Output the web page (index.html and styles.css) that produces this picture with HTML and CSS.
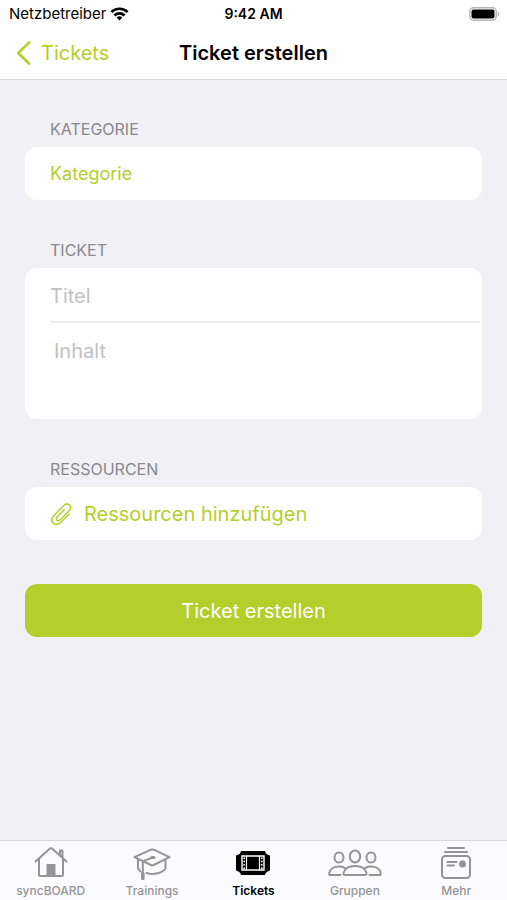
FILE: index.html
```html
<!DOCTYPE html>
<html lang="de">
<head>
<meta charset="utf-8">
<meta name="viewport" content="width=device-width, initial-scale=1">
<title>Ticket erstellen</title>
<link rel="stylesheet" href="styles.css">
</head>
<body>
<header class="header">
  <div class="status">
    <span class="carrier">Netzbetreiber
      <svg width="19" height="14" viewBox="0 0 18 14" aria-hidden="true"><g fill="none" stroke="#000" stroke-width="2.700"><path d="M.9 5.1a11.5 11.5 0 0 1 16.2 0"/><path d="M3.9 8.500a7.3 7.3 0 0 1 10.2 0"/></g><path d="M9 13.6l-2.900-3a4.2 4.2 0 0 1 5.800 0z"/></svg>
    </span>
    <span class="time">9:42 AM</span>
    <svg class="battery" width="31" height="14" viewBox="0 0 31 14" aria-hidden="true"><rect x=".75" y=".75" width="26.5" height="12.5" rx="4" fill="#fff" stroke="#b5b5b5" stroke-width="1.5"/><rect x="2.5" y="2.5" width="23" height="9" rx="2"/><path d="M28.7 4.6c2 .8 2 4 0 4.800z" fill="#b5b5b5"/></svg>
  </div>
  <nav class="navbar">
    <a class="back" href="#">
      <svg width="15" height="24" viewBox="0 0 15 24" aria-hidden="true"><path d="M13 1.500L2.200 12 13 22.500" fill="none" stroke="currentColor" stroke-width="2.600" stroke-linecap="round" stroke-linejoin="round"/></svg>
      Tickets
    </a>
    <h1 class="title">Ticket erstellen</h1>
  </nav>
</header>
<main class="main">
  <form class="form">
    <section class="section">
      <h2 class="label">KATEGORIE</h2>
      <button class="card row category" type="button">Kategorie</button>
    </section>
    <section class="section">
      <h2 class="label">TICKET</h2>
      <div class="card">
        <input class="field" type="text" placeholder="Titel" aria-label="Titel">
        <textarea class="field area" placeholder="Inhalt" aria-label="Inhalt"></textarea>
      </div>
    </section>
    <section class="section">
      <h2 class="label">RESSOURCEN</h2>
      <button class="card row" type="button">
        <svg width="22" height="24" viewBox="0 0 22 24" fill="none" stroke="currentColor" stroke-width="1.500" stroke-linecap="round" stroke-linejoin="round" aria-hidden="true"><path d="M19.200 12L11.200 20C8.600 22.600 5.200 23.100 3.200 21C1.200 19 1.600 16.100 4 13.600L13.600 3.700C15.400 1.800 18 1.400 19.600 3C21.200 4.600 20.800 7 19 8.900L10.300 17.700C9.200 18.800 7.800 19 6.900 18.100C6 17.200 6.200 15.900 7.300 14.800L14.200 7.800"/></svg>
        Ressourcen hinzufügen
      </button>
    </section>
    <button class="submit" type="submit">Ticket erstellen</button>
  </form>
</main>
<nav class="tabs">
  <a class="tab" href="#">
    <svg width="34" height="34" viewBox="0 0 34 34" fill="none" stroke="currentColor" stroke-width="2" stroke-linecap="round" stroke-linejoin="round" aria-hidden="true"><path d="M1.500 15.500L15.700 2.800Q17 1.700 18.300 2.800L32.500 15.500M5 13v15.500q0 1.500 1.500 1.500h21q1.500 0 1.500-1.500V13M26 9V4.500h2.500v7"/><path d="M13.500 29.500V19h7v10.500z" fill="currentColor"/></svg>
    syncBOARD
  </a>
  <a class="tab" href="#">
    <svg width="40" height="34" viewBox="0 0 40 34" fill="none" stroke="currentColor" stroke-width="2" stroke-linecap="round" stroke-linejoin="round" aria-hidden="true"><path d="M2.500 11.200L19 3.700q1.300-.5 2.600 0L37.500 11.200L21.600 19q-1.300.6-2.600 0zM6 13.500V22q.5 2 2.500 3.500M33.500 14v8c-2 5-12.500 7.500-19 5M21 11.500Q13 14 10.800 16v12"/><path d="M10.800 27.500v5" stroke-width="3.600"/><path d="M20 11.500h2" stroke-width="3"/></svg>
    Trainings
  </a>
  <a class="tab active" href="#" aria-current="page">
    <svg width="36" height="34" viewBox="0 0 36 34" aria-hidden="true"><path d="M6 5h24q.5 3.500 5 4.500v15q-4.500 1-5 4.500H6q-.5-3.500-5-4.500v-15Q5.500 8.500 6 5z"/><path d="M7 10h22v14H7z" fill="none" stroke="#fff" stroke-width="1.400"/><path d="M11.500 10v14M24.500 10v14" stroke="#fff" stroke-width="1.200"/><path d="M9.200 11.500v12M26.800 11.500v12" stroke="#fff" stroke-width="1.600" stroke-dasharray="1.500 1.800"/></svg>
    Tickets
  </a>
  <a class="tab" href="#">
    <svg width="54" height="34" viewBox="0 0 54 34" fill="none" stroke="currentColor" stroke-width="2" stroke-linecap="round" stroke-linejoin="round" aria-hidden="true"><ellipse cx="27" cy="10.500" rx="5.200" ry="6"/><ellipse cx="11" cy="11.500" rx="4.500" ry="5"/><ellipse cx="43" cy="11.500" rx="4.500" ry="5"/><path d="M17 29q-1.800 0-1.500-1.800C16.500 22.500 21 20 27 20s10.500 2.500 11.500 7.200Q38.800 29 37 29zM12.500 29H2.500Q.8 29 1.200 27.200C2 23 6 20.500 11 20.500q3.500 0 5.500 1.300M41.500 29h10q1.700 0 1.300-1.800C52 23 48 20.500 43 20.500q-3.500 0-5.500 1.300"/></svg>
    Gruppen
  </a>
  <a class="tab" href="#">
    <svg width="32" height="34" viewBox="0 0 32 34" fill="none" stroke="currentColor" stroke-width="2" stroke-linecap="round" aria-hidden="true"><path d="M8 2h16M5 6h22M7.500 16h9M7.500 19.500h6.500"/><rect x="2" y="10" width="28" height="22" rx="3.500"/><circle cx="22.500" cy="18" r="2.500" fill="currentColor"/></svg>
    Mehr
  </a>
</nav>
</body>
</html>
```
FILE: styles.css
```css
* {
  box-sizing: border-box;
}

body {
  margin: 0;
  min-height: 100vh;
  display: flex;
  flex-direction: column;
  background: #f0f0f5;
  color: #000;
  font-family: Inter, "Liberation Sans", sans-serif;
  font-size: 20px;
}

button,
input,
textarea {
  font: inherit;
}

a {
  color: inherit;
  text-decoration: none;
}

svg {
  display: block;
  flex: none;
}

.header {
  background: #fff;
  border-bottom: 1px solid #dcdcdf;
}

.status {
  display: grid;
  grid-template-columns: 1fr auto 1fr;
  align-items: center;
  height: 27px;
  padding: 0 7px;
  font-size: 14px;
}

.carrier {
  display: flex;
  align-items: center;
  gap: 4px;
  padding-left: 2px;
  font-size: 15px;
}

.time {
  font-weight: 600;
}

.battery {
  justify-self: end;
}

.navbar {
  display: grid;
  grid-template-columns: 1fr auto 1fr;
  align-items: center;
  height: 52px;
  padding: 0 16px;
}

.back {
  display: flex;
  align-items: center;
  gap: 10px;
  color: #b4ce2b;
}

.title {
  margin: 0;
  font-size: 20px;
  font-weight: 600;
}

.main {
  flex: 1;
  padding: 39px 25px;
}

.form {
  display: flex;
  flex-direction: column;
}

.section {
  margin-bottom: 40px;
}

.label {
  margin: 0 0 8px;
  padding: 0 25px;
  color: #89898e;
  font-size: 16px;
  font-weight: 400;
  line-height: 20px;
}

.card {
  width: 100%;
  border: 0;
  border-radius: 12px;
  background: #fff;
  overflow: hidden;
}

.row {
  display: flex;
  align-items: center;
  gap: 12px;
  height: 53px;
  padding: 0 25px;
  color: #b4ce2b;
  text-align: left;
}

.category {
  font-size: 18px;
}

.field {
  display: block;
  width: calc(100% - 27px);
  height: 55px;
  margin: 0 2px 0 25px;
  padding: 2px 0 0;
  border: 0;
  border-bottom: 2px solid #ededf0;
  border-radius: 0;
  outline: 0;
  background: transparent;
}

.field::placeholder {
  color: #c1c1c4;
  opacity: 1;
}

.area {
  height: 96px;
  padding: 16px 4px;
  border: 0;
  line-height: 24px;
  resize: none;
}

.submit {
  height: 53px;
  margin-top: 4px;
  border: 0;
  border-radius: 12px;
  background: #b4ce2b;
  color: #fff;
}

.tabs {
  display: grid;
  grid-template-columns: repeat(5, 1fr);
  height: 60px;
  border-top: 1px solid #d8d8dc;
  background: #fbfbfe;
}

.tab {
  display: flex;
  flex-direction: column;
  align-items: center;
  gap: 3px;
  padding-top: 5px;
  color: #949498;
  font-size: 12px;
  font-weight: 500;
  line-height: 16px;
}

.active {
  color: #000;
  font-weight: 600;
}
```
